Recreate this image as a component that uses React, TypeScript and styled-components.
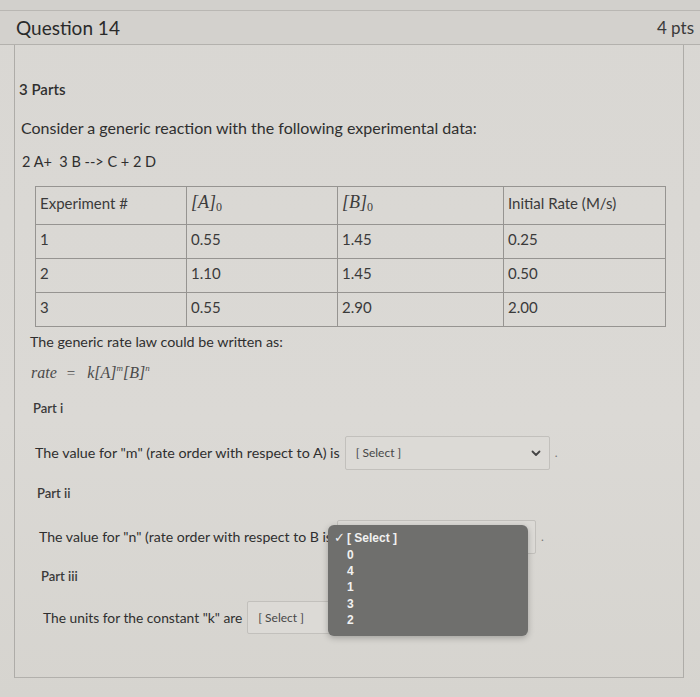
import React from "react";
import styled, { createGlobalStyle } from "styled-components";

const Global = createGlobalStyle`
  html, body { margin: 0; padding: 0; }
  body {
    width: 700px; height: 697px; overflow: hidden;
    background: #d6d4d0;
    font-family: Lato, "Open Sans", "Liberation Sans", sans-serif;
    color: #2f2f2f;
  }
`;

const Page = styled.div`
  width: 700px;
  height: 697px;
  display: flex;
  flex-direction: column;
  padding-top: 10px;
  box-sizing: border-box;
  background: linear-gradient(180deg, #d2d0cc 0px, #d2d0cc 10px, #d9d7d3 10px, #dbd9d5 60%, #d6d4cf 100%);
`;

const Header = styled.header`
  height: 33px;
  border-top: 1px solid #b9b7b3;
  border-bottom: 1px solid #b3b1ad;
  background: #d3d1cd;
  display: flex;
  align-items: center;
  justify-content: space-between;
  padding: 0 6px 0 16px;
  font-size: 19px;
  color: #2a2a2a;
`;

const Pts = styled.span`
  font-size: 17px;
  color: #3a3a3a;
`;

const Body = styled.main`
  margin: 0 16px 0 14px;
  border-left: 1px solid #aeaca8;
  border-right: 1px solid #aeaca8;
  border-bottom: 1px solid #b2b0ac;
  height: 633px;
  box-sizing: border-box;
  position: relative;
`;

const Line = styled.div<{ $indent: number; $top: number; $size?: number; $weight?: number; $color?: string }>`
  margin-left: ${(p) => p.$indent}px;
  margin-top: ${(p) => p.$top}px;
  font-size: ${(p) => p.$size ?? 15}px;
  font-weight: ${(p) => p.$weight ?? 400};
  color: ${(p) => p.$color ?? "#2f2f2f"};
  line-height: 20px;
  display: flex;
  align-items: center;
  white-space: nowrap;
`;

const Table = styled.table`
  margin: 14px 0 0 20px;
  width: 631px;
  border-collapse: collapse;
  border: 1px solid #8c8b88;
  font-size: 15px;
  color: #3a3a3a;
  td {
    border: 1px solid #969491;
    padding: 0 4px 5px 4px;
    vertical-align: middle;
    height: 28px;
  }
  tr:first-child td { height: 32px; }
`;

const Math = styled.span`
  font-family: "Liberation Serif", "DejaVu Serif", serif;
  font-size: 18px;
  color: #3c3c3c;
  sub { font-size: 12px; vertical-align: -3px; }
`;

const Formula = styled.span`
  font-family: "Liberation Serif", "DejaVu Serif", serif;
  font-style: italic;
  font-size: 16px;
  color: #4a4a4a;
  sup { font-size: 9px; vertical-align: 7px; line-height: 0; }
`;

const Eq = styled.span`
  font-style: normal;
  margin: 0 12px 0 10px;
  font-size: 15px;
`;

const SelectBox = styled.div<{ $width: number; $height?: number }>`
  position: relative;
  width: ${(p) => p.$width}px;
  height: ${(p) => p.$height ?? 34}px;
  margin-left: 5px;
  border: 1px solid #c2c0bc;
  border-radius: 2px;
  background: #dcdad6;
  box-sizing: border-box;
  display: flex;
  align-items: center;
  justify-content: space-between;
  padding: 0 8px 0 10px;
  font-size: 12px;
  color: #474747;
`;

const Placeholder = styled.span<{ $covered?: boolean }>`
  visibility: ${(p) => (p.$covered ? "hidden" : "visible")};
`;

const Chevron = () => (
  <svg width="10" height="7" viewBox="0 0 10 7">
    <path d="M1.5 1.5 L5 5 L8.5 1.5" fill="none" stroke="#444" strokeWidth="1.8" strokeLinecap="round" strokeLinejoin="round" />
  </svg>
);

const Dot = styled.span`
  margin-left: 5px;
  font-size: 12px;
  color: #777;
`;

const Menu = styled.ul`
  position: absolute;
  left: -10px;
  top: 4px;
  width: 200px;
  height: 111px;
  margin: 0;
  padding: 5px 0 0 0;
  list-style: none;
  box-sizing: border-box;
  background: #6f6f6d;
  border-radius: 6px;
  box-shadow: 0 2px 6px rgba(0,0,0,0.25);
  z-index: 2;
  font-family: "Liberation Sans", Arial, sans-serif;
  font-weight: 700;
  font-size: 12px;
  color: #f1f1f1;
`;

const Option = styled.li`
  height: 16.4px;
  line-height: 16px;
  padding-left: 6px;
  display: flex;
  align-items: center;
`;

const Check = styled.span<{ $on?: boolean }>`
  width: 13px;
  display: inline-block;
  visibility: ${(p) => (p.$on ? "visible" : "hidden")};
  font-weight: 400;
  font-size: 13px;
`;

const rows = [
  ["1", "0.55", "1.45", "0.25"],
  ["2", "1.10", "1.45", "0.50"],
  ["3", "0.55", "2.90", "2.00"],
];

export default function App() {
  return (
    <>
      <Global />
      <Page>
        <Header>
          <span>Question 14</span>
          <Pts>4 pts</Pts>
        </Header>
        <Body>
          <Line $indent={4} $top={34} $size={15} $weight={600}>3 Parts</Line>
          <Line $indent={6} $top={19} $size={16}>Consider a generic reaction with the following experimental data:</Line>
          <Line $indent={7} $top={14} $size={14.5}>2 A+&nbsp; 3 B --&gt; C + 2 D</Line>
          <Table>
            <tbody>
              <tr>
                <td style={{ width: 142 }}>Experiment #</td>
                <td style={{ width: 142 }}><Math><i>[A]</i><sub>0</sub></Math></td>
                <td style={{ width: 157 }}><Math><i>[B]</i><sub>0</sub></Math></td>
                <td>Initial Rate (M/s)</td>
              </tr>
              {rows.map((r) => (
                <tr key={r[0]}>
                  {r.map((c, i) => (
                    <td key={i}>{c}</td>
                  ))}
                </tr>
              ))}
            </tbody>
          </Table>
          <Line $indent={15} $top={5} $size={14.3}>The generic rate law could be written as:</Line>
          <Line $indent={16} $top={11} $size={14}>
            <Formula>
              rate<Eq>=</Eq>k[A]<sup>m</sup>[B]<sup>n</sup>
            </Formula>
          </Line>
          <Line $indent={18} $top={15} $size={13} $weight={600} $color="#3a3a3a">Part i</Line>
          <Line $indent={20} $top={18} $size={14.3} style={{ height: 34 }}>
            The value for "m" (rate order with respect to A) is
            <SelectBox $width={205}>
              <Placeholder>[ Select ]</Placeholder>
              <Chevron />
            </SelectBox>
            <Dot>.</Dot>
          </Line>
          <Line $indent={22} $top={13} $size={13} $weight={600} $color="#3a3a3a">Part ii</Line>
          <Line $indent={24} $top={17} $size={14.1} style={{ height: 34 }}>
            The value for "n" (rate order with respect to B is
            <SelectBox $width={199}>
              <Placeholder $covered>[ Select ]</Placeholder>
              <Chevron />
              <Menu>
                <Option><Check $on>✓</Check>[ Select ]</Option>
                {["0", "4", "1", "3", "2"].map((o) => (
                  <Option key={o}><Check />{o}</Option>
                ))}
              </Menu>
            </SelectBox>
            <Dot>.</Dot>
          </Line>
          <Line $indent={26} $top={12} $size={13} $weight={600} $color="#3a3a3a">Part iii</Line>
          <Line $indent={28} $top={15} $size={13.8} style={{ height: 33 }}>
            The units for the constant "k" are
            <SelectBox $width={180} $height={33}>
              <Placeholder>[ Select ]</Placeholder>
            </SelectBox>
          </Line>
        </Body>
      </Page>
    </>
  );
}
